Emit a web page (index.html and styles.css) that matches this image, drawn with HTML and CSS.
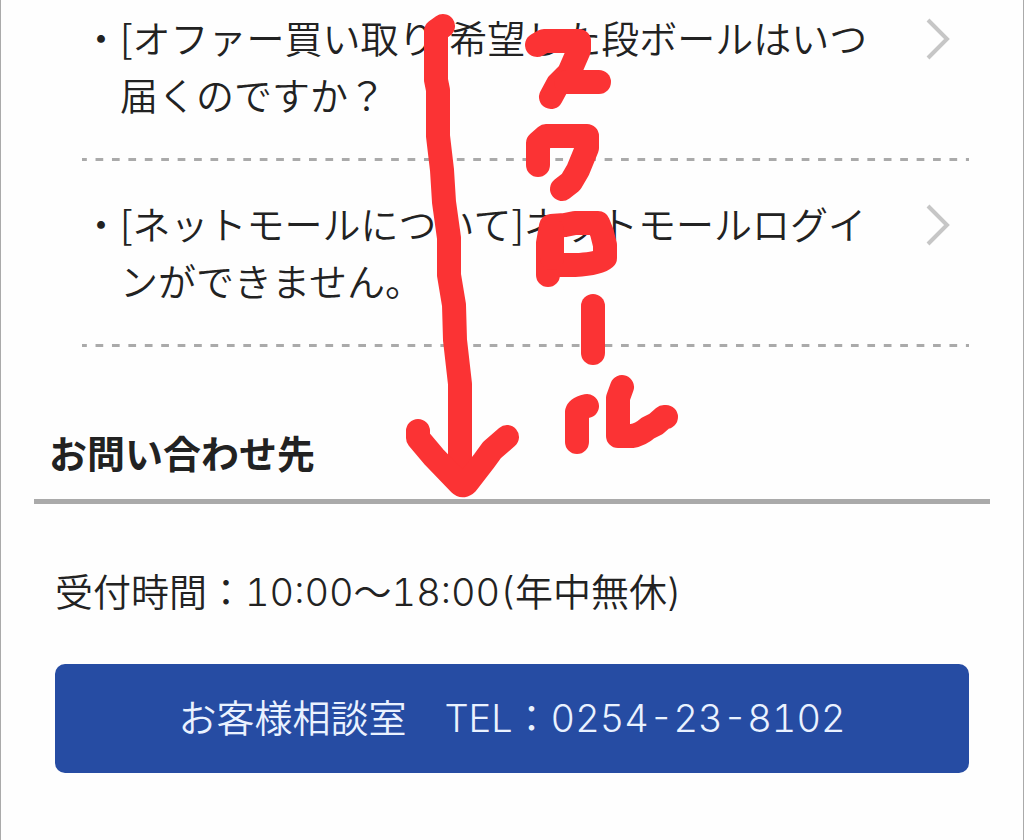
FILE: index.html
```
<!DOCTYPE html>
<html lang="ja">
  <head>
    <meta charset="utf-8">
    <meta name="viewport" content="width=device-width, initial-scale=1">
    <title>お問い合わせ先</title>
    <link rel="stylesheet" href="styles.css">
  </head>
  <body>
    <main class="page">
      <ul class="faq-list">
        <li class="faq-item">
          <a href="#" class="faq-link">
            <span class="bullet">・</span>
            <span class="question">[オファー買い取り]希望した段ボールはいつ届くのですか？</span>
            <svg class="chevron" viewBox="0 0 24 42" aria-hidden="true"><path d="M2 2 L21 21 L2 40"/></svg>
          </a>
        </li>
        <li class="faq-item">
          <a href="#" class="faq-link">
            <span class="bullet">・</span>
            <span class="question">[ネットモールについて]ネットモールログインができません。</span>
            <svg class="chevron" viewBox="0 0 24 42" aria-hidden="true"><path d="M2 2 L21 21 L2 40"/></svg>
          </a>
        </li>
      </ul>

      <section class="contact">
        <h2>お問い合わせ先</h2>
        <div class="contact-body">
          <p class="hours">受付時間：10:00〜18:00(年中無休)</p>
          <a href="tel:0254-23-8102" class="tel-button">お客様相談室　TEL：0254-23-8102</a>
        </div>
      </section>

      <!-- hand-drawn "scroll" note -->
      <svg class="note" viewBox="400 0 290 510" role="img" aria-label="スクロール">
        <!-- arrow -->
        <path d="M443 26 L436 31 V80 L438 90 V136 L442 170 L444 202 L449 238 V275 L454 305 L455 340 L460 384 V480"/>
        <path d="M418 431 V438 L434 457 L460 484 Q463 487 467 483 L484 461 L492 450 L507 437"/>
        <!-- su -->
        <path d="M537 45 L544 41 H579 V50 L569 73 L558 84 L551 97"/>
        <path d="M566 82 H599"/>
        <!-- ku -->
        <path d="M538 165 V143 L546 136 H587 V148 L578 170 L571 182 L562 189"/>
        <!-- ro -->
        <path d="M548 275 V243 L551 226 L565 225 L575 223 H598 L602 233 L605 245 V258 Q598 264 575 265 H556"/>
        <path d="M552 230 V258"/>
        <!-- long vowel -->
        <path d="M593 306 V353"/>
        <!-- ru -->
        <path d="M587 406 Q578 408 577 412 V442"/>
        <path d="M622 387 L618 398 V436 H632 Q640 435 648 428 L656 424 L664 417 H666"/>
      </svg>
    </main>
  </body>
</html>
```
FILE: styles.css
```
* {
  box-sizing: border-box;
}

body {
  margin: 0;
  background: #fefefe;
  color: #222;
  font-family: "Noto Sans CJK JP", sans-serif;
  font-size: 38px;
  font-weight: 350;
  line-height: 57px;
}

.page {
  position: relative;
  min-height: 100vh;
  padding: 0 33px 68px;
  border-left: 1px solid #aaa;
  border-right: 1px solid #aaa;
}

.faq-list {
  margin: 0;
  padding: 0 21px 0 48px;
  list-style: none;
}

/* dashed rule under every item */
.faq-item {
  padding: 33px 0 39px;
  background: linear-gradient(90deg, #aaa 30%, transparent 30% 82%, #aaa 82%) left bottom / calc(100% / 54) 3px repeat-x;
}

.faq-item:first-child {
  padding-top: 8px;
}

.faq-link {
  display: flex;
  color: inherit;
  text-decoration: none;
}

.question {
  flex: 1;
  padding-right: 32px;
}

.chevron {
  flex: none;
  width: 24px;
  height: 42px;
  margin: 10px 19px 0 0;
  fill: none;
  stroke: #c6c6c6;
  stroke-width: 4;
}

.contact h2 {
  margin: 76px 0 0;
  padding: 0 15px 19px;
  border-bottom: 5px solid #aaa;
  font-size: 38px;
  font-weight: 700;
}

.contact-body {
  padding: 60px 21px 0;
}

.hours,
.tel-button {
  font-family: Inter, "Noto Sans CJK JP", sans-serif;
  font-variant-numeric: tabular-nums;
}

.hours {
  margin: 0 0 43px;
}

.tel-button {
  display: block;
  padding: 26px 0;
  border-radius: 10px;
  background: #264ca3;
  color: #eaf2ff;
  text-align: center;
  text-decoration: none;
}

.note {
  position: absolute;
  top: 0;
  left: 399px;
  width: 290px;
  height: 510px;
  fill: none;
  stroke: #fb3334;
  stroke-width: 24;
  stroke-linecap: round;
  stroke-linejoin: round;
  pointer-events: none;
}
```
